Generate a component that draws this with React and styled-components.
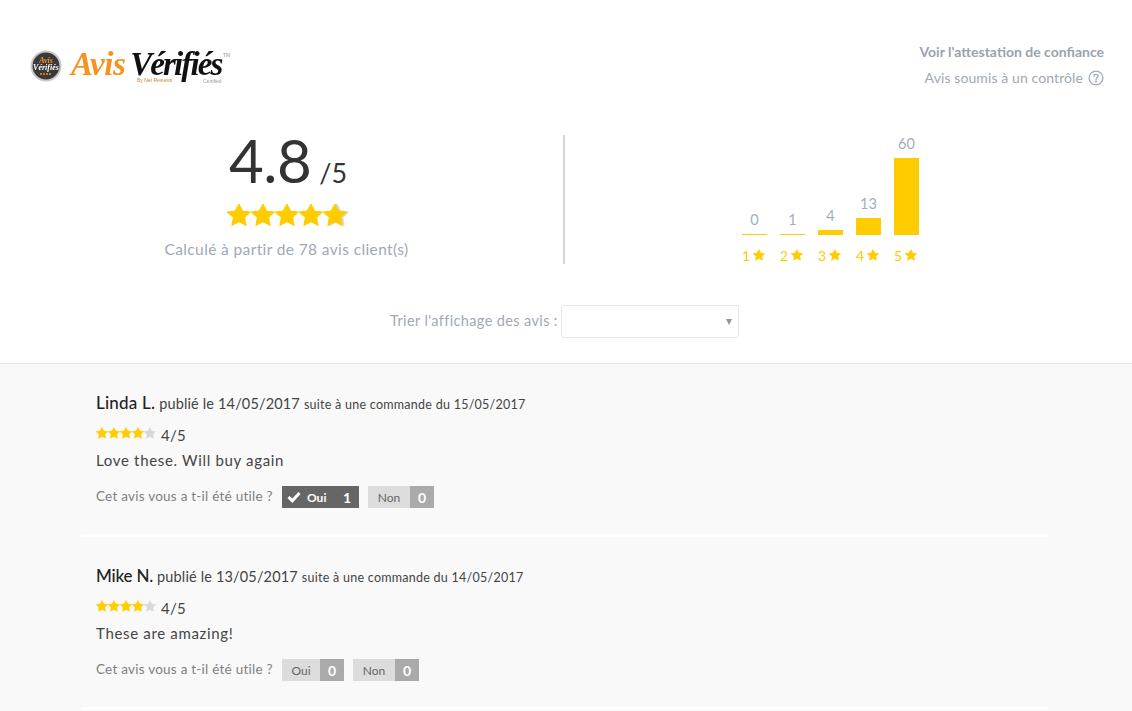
import React from "react";
import styled, { createGlobalStyle } from "styled-components";

const Global = createGlobalStyle`
  html, body { margin: 0; padding: 0; background: #fff; overflow: hidden; }
  body { font-family: Lato, "Open Sans", sans-serif; }
`;

const Page = styled.div`
  width: 1132px;
  height: 711px;
  overflow: hidden;
  display: flex;
  flex-direction: column;
`;

const Header = styled.header`
  height: 135px;
  box-sizing: border-box;
  padding: 43px 28px 0 30px;
  display: flex;
  justify-content: space-between;
  align-items: flex-start;
`;

const Logo = styled.div`
  display: flex;
  align-items: center;
  gap: 9px;
  height: 46px;
  filter: blur(0.3px);
`;

const Wordmark = styled.div`
  position: relative;
  display: flex;
  gap: 5px;
  margin-top: -4px;
  font-family: "Liberation Serif", serif;
  font-style: italic;
  font-weight: 700;
  font-size: 33px;
  line-height: 26px;
`;

const WordOrange = styled.span`
  color: #f6921e;
  letter-spacing: -0.5px;
`;

const WordBlack = styled.span`
  color: #111;
  letter-spacing: -1.9px;
`;

const TinyMark = styled.span`
  position: absolute;
  left: ${(p) => p.$x}px;
  top: ${(p) => p.$y}px;
  font-family: "Liberation Sans", sans-serif;
  font-style: normal;
  font-weight: 400;
  font-size: 5px;
  line-height: 6px;
  letter-spacing: 0;
  color: ${(p) => p.$color};
  white-space: nowrap;
`;

const Attest = styled.div`
  display: flex;
  flex-direction: column;
  align-items: flex-end;
  gap: 8px;
  color: #a0a8b4;
  font-size: 14px;
  line-height: 18px;
`;

const AttestLink = styled.div`
  font-weight: 700;
  color: #9aa2ae;
  font-size: 14px;
`;

const AttestNote = styled.div`
  display: flex;
  align-items: center;
  gap: 5px;
  letter-spacing: 0.1px;
`;

const Summary = styled.section`
  display: flex;
  height: 129px;
`;

const ScoreCol = styled.div`
  width: 565px;
  box-sizing: border-box;
  border-right: 2px solid #d6d6d6;
  padding-left: 10px;
  display: flex;
  flex-direction: column;
  align-items: center;
`;

const ScoreLine = styled.div`
  display: flex;
  align-items: baseline;
  gap: 8px;
  color: #333;
  height: 56px;
  margin-top: -3px;
  margin-left: 3px;
`;

const ScoreValue = styled.span`
  font-size: 60px;
  line-height: 56px;
  font-weight: 400;
  letter-spacing: -0.5px;
`;

const ScoreMax = styled.span`
  font-size: 27px;
  line-height: 30px;
`;

const BigStarsWrap = styled.div`
  margin-top: 15px;
`;

const ScoreNote = styled.div`
  margin-top: 12px;
  font-size: 15.5px;
  line-height: 20px;
  color: #a0a8b4;
  letter-spacing: 0.38px;
`;

const Chart = styled.div`
  flex: 1;
  padding-left: 177px;
  display: flex;
  gap: 13px;
  align-items: flex-end;
`;

const BarCol = styled.div`
  width: 25px;
  display: flex;
  flex-direction: column;
  align-items: center;
`;

const BarCount = styled.div`
  font-size: 14.5px;
  line-height: 18px;
  color: #a6adb8;
  margin-bottom: 5px;
`;

const Bar = styled.div`
  width: 25px;
  background: #ffcc00;
`;

const BarLabel = styled.div`
  align-self: flex-start;
  margin-top: 12px;
  margin-bottom: 1px;
  height: 16px;
  display: flex;
  align-items: center;
  gap: 3px;
  color: #ffcc00;
  font-size: 14px;
  white-space: nowrap;
`;

const SortRow = styled.div`
  margin-top: 41px;
  height: 33px;
  display: flex;
  align-items: center;
  justify-content: center;
  gap: 3px;
  padding-right: 3px;
  color: #a0a8b4;
  font-size: 14.5px;
  letter-spacing: 0.37px;
`;

const SortLabel = styled.span`
  margin-bottom: 2px;
`;

const SelectBox = styled.div`
  width: 178px;
  height: 33px;
  box-sizing: border-box;
  border: 1px solid #e6e8ec;
  border-radius: 2px;
  background: #fff;
  display: flex;
  align-items: center;
  justify-content: flex-end;
  padding-right: 6px;
`;

const Caret = styled.div`
  width: 0;
  height: 0;
  border-left: 3px solid transparent;
  border-right: 3px solid transparent;
  border-top: 6px solid #8f96a3;
`;

const Reviews = styled.section`
  margin-top: 25px;
  flex: 1;
  background: #f9f9f9;
  border-top: 1px solid #e6e8ec;
  padding: 0 84px 0 81px;
`;

const Review = styled.article`
  height: 173px;
  box-sizing: border-box;
  padding: 28px 15px 0;
  border-bottom: 3px solid #fff;
  color: #333;
`;

const Meta = styled.div`
  display: flex;
  align-items: baseline;
  height: 24px;
  white-space: nowrap;
`;

const Author = styled.span`
  font-size: 17px;
  font-weight: 500;
  color: #222;
  margin-right: 4px;
  letter-spacing: ${(p) => p.$track}px;
`;

const Published = styled.span`
  font-size: 14.5px;
  color: #444;
  margin-right: 4px;
  letter-spacing: 0.15px;
`;

const Ordered = styled.span`
  font-size: 12.5px;
  color: #444;
  letter-spacing: 0.26px;
`;

const RatingRow = styled.div`
  display: flex;
  align-items: flex-end;
  gap: 5px;
  height: 24px;
  margin-top: 4px;
`;

const SmallStarsWrap = styled.div`
  margin-bottom: 5px;
`;

const RatingText = styled.span`
  font-size: 15px;
  line-height: 18px;
  color: #444;
  letter-spacing: 0.2px;
`;

const Body = styled.p`
  margin: 6px 0 0;
  font-size: 15px;
  line-height: 20px;
  color: #444;
  letter-spacing: 0.67px;
`;

const Helpful = styled.div`
  margin-top: 16px;
  display: flex;
  align-items: center;
  height: 22px;
`;

const HelpfulLabel = styled.span`
  font-size: 13.5px;
  color: #808080;
  margin-right: 9px;
  margin-bottom: 2px;
  letter-spacing: 0.24px;
  width: 177px;
  white-space: nowrap;
`;

const Vote = styled.div`
  display: flex;
  height: 22px;
  margin-right: ${(p) => p.$gap}px;
  font-size: 12px;
`;

const VoteName = styled.div`
  width: ${(p) => p.$w}px;
  display: flex;
  align-items: center;
  justify-content: ${(p) => (p.$on ? "flex-start" : "center")};
  gap: 6px;
  box-sizing: border-box;
  padding-left: ${(p) => (p.$on ? 5 : 0)}px;
  background: ${(p) => (p.$on ? "#666" : "#dcdcdc")};
  color: ${(p) => (p.$on ? "#fff" : "#666")};
  font-weight: ${(p) => (p.$on ? 700 : 400)};
`;

const VoteCount = styled.div`
  width: ${(p) => p.$w}px;
  display: flex;
  align-items: center;
  justify-content: center;
  background: ${(p) => (p.$on ? "#666" : "#aaa")};
  color: #fff;
  font-size: 14px;
  font-weight: 700;
`;

const StarsBox = styled.div`
  position: relative;
  display: flex;
  width: ${(p) => p.$size * 5}px;
  height: ${(p) => p.$size}px;
`;

const StarsFill = styled.div`
  position: absolute;
  left: 0;
  top: 0;
  height: 100%;
  display: flex;
  overflow: hidden;
`;

const StarIcon = styled.svg`
  flex: none;
  display: block;
  margin-left: ${(p) => p.$shift || 0}px;
`;

const Star = ({ size, color, shift }) => (
  <StarIcon $shift={shift} width={size} height={size} viewBox="0 0 24 24" fill={color}>
    <path
      d="M12 .9l3.5 7.1 7.9 1.1-5.7 5.5 1.4 7.9-7.1-3.7-7.1 3.7 1.4-7.9L.1 9.1 8 8z"
      stroke={color}
      strokeWidth="1"
      strokeLinejoin="round"
    />
  </StarIcon>
);

const Stars = ({ size, value, shift = 0 }) => {
  const full = Math.floor(value);
  return (
    <StarsBox $size={size}>
      {[0, 1, 2, 3, 4].map((i) => (
        <Star
          key={i}
          size={size}
          color={i < full ? "transparent" : "#d8d8d8"}
          shift={i === full ? shift : 0}
        />
      ))}
      <StarsFill style={{ width: `${(Math.ceil(value) / 5) * 100}%` }}>
        {[0, 1, 2, 3, 4].map((i) => (
          <Star key={i} size={size} color="#ffcc00" />
        ))}
      </StarsFill>
    </StarsBox>
  );
};

const Emblem = () => (
  <svg width="32" height="32" viewBox="0 0 32 32">
    <circle cx="16" cy="16" r="15.5" fill="#c9c9c9" />
    <circle cx="16" cy="16" r="13.5" fill="#3a3a3a" />
    <text x="16" y="13" textAnchor="middle" fontSize="8" fontFamily="Liberation Serif" fontStyle="italic" fontWeight="700" fill="#f6921e">Avis</text>
    <text x="16" y="20" textAnchor="middle" fontSize="8" fontFamily="Liberation Serif" fontStyle="italic" fontWeight="700" fill="#fff">Vérifiés</text>
    <path d="M10 24h12" stroke="#f6921e" strokeWidth="1.6" strokeDasharray="2 1" />
  </svg>
);

const Help = () => (
  <svg width="16" height="16" viewBox="0 0 16 16" fill="none" stroke="#a0a8b4" strokeWidth="1.3">
    <circle cx="8" cy="8" r="6.9" />
    <path d="M5.9 6.3c0-1.3 1-2 2.1-2s2.1.8 2.1 1.9c0 1.5-2.1 1.6-2.1 3.2" strokeLinecap="round" />
    <circle cx="8" cy="11.6" r=".5" fill="#a0a8b4" />
  </svg>
);

const Check = () => (
  <svg width="14" height="12" viewBox="0 0 14 12" fill="none" stroke="#fff" strokeWidth="3">
    <path d="M1.5 6l3.8 3.8L12.5 2" />
  </svg>
);

const bars = [
  { n: 1, count: 0, h: 1 },
  { n: 2, count: 1, h: 1 },
  { n: 3, count: 4, h: 5 },
  { n: 4, count: 13, h: 17 },
  { n: 5, count: 60, h: 77 },
];

const reviews = [
  {
    author: "Linda L.",
    track: 0.2,
    pub: "14/05/2017",
    order: "15/05/2017",
    text: "Love these. Will buy again",
    yes: 1,
    on: true,
  },
  {
    author: "Mike N.",
    track: -0.2,
    pub: "13/05/2017",
    order: "14/05/2017",
    text: "These are amazing!",
    yes: 0,
    on: false,
  },
];

export default function App() {
  return (
    <Page>
      <Global />
      <Header>
        <Logo>
          <Emblem />
          <Wordmark>
            <WordOrange>Avis</WordOrange>
            <WordBlack>Vérifiés</WordBlack>
            <TinyMark $x={66} $y={26} $color="#c9853a">By Net Reviews</TinyMark>
            <TinyMark $x={132} $y={27} $color="#999">Certified</TinyMark>
            <TinyMark $x={152} $y={1} $color="#999">TM</TinyMark>
          </Wordmark>
        </Logo>
        <Attest>
          <AttestLink>Voir l'attestation de confiance</AttestLink>
          <AttestNote>
            Avis soumis à un contrôle <Help />
          </AttestNote>
        </Attest>
      </Header>
      <Summary>
        <ScoreCol>
          <ScoreLine>
            <ScoreValue>4.8</ScoreValue>
            <ScoreMax>/5</ScoreMax>
          </ScoreLine>
          <BigStarsWrap>
            <Stars size={24} value={4.8} shift={2} />
          </BigStarsWrap>
          <ScoreNote>Calculé à partir de 78 avis client(s)</ScoreNote>
        </ScoreCol>
        <Chart>
          {bars.map((b) => (
            <BarCol key={b.n}>
              <BarCount>{b.count}</BarCount>
              <Bar style={{ height: b.h }} />
              <BarLabel>
                {b.n}
                <Star size={12} color="#ffcc00" />
              </BarLabel>
            </BarCol>
          ))}
        </Chart>
      </Summary>
      <SortRow>
        <SortLabel>Trier l'affichage des avis :</SortLabel>
        <SelectBox>
          <Caret />
        </SelectBox>
      </SortRow>
      <Reviews>
        {reviews.map((r) => (
          <Review key={r.author}>
            <Meta>
              <Author $track={r.track}>{r.author}</Author>
              <Published>publié le {r.pub}</Published>
              <Ordered>suite à une commande du {r.order}</Ordered>
            </Meta>
            <RatingRow>
              <SmallStarsWrap>
                <Stars size={12} value={4} />
              </SmallStarsWrap>
              <RatingText>4/5</RatingText>
            </RatingRow>
            <Body>{r.text}</Body>
            <Helpful>
              <HelpfulLabel>Cet avis vous a t-il été utile ?</HelpfulLabel>
              <Vote $gap={9}>
                <VoteName $on={r.on} $w={r.on ? 53 : 38}>
                  {r.on && <Check />}
                  Oui
                </VoteName>
                <VoteCount $on={r.on} $w={24}>{r.yes}</VoteCount>
              </Vote>
              <Vote $gap={0}>
                <VoteName $w={42}>Non</VoteName>
                <VoteCount $w={24}>0</VoteCount>
              </Vote>
            </Helpful>
          </Review>
        ))}
      </Reviews>
    </Page>
  );
}
